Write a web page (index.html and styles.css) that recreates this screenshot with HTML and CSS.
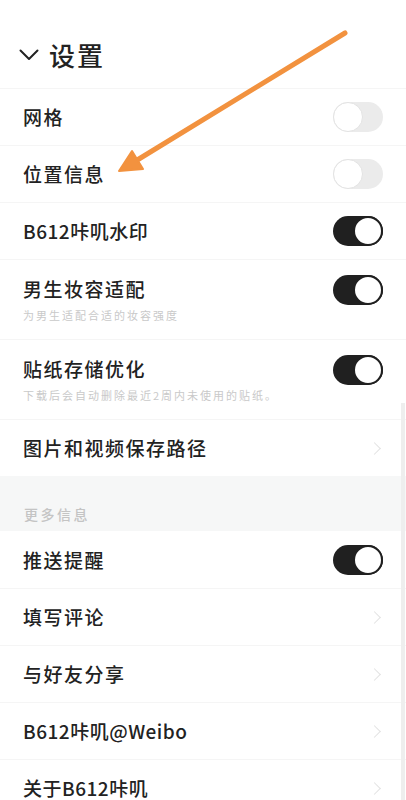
FILE: index.html
```html
<!DOCTYPE html>
<html lang="zh-CN">
<head>
<meta charset="utf-8">
<link rel="stylesheet" href="styles.css">
</head>
<body>
<div class="page">
  <header class="head">
    <svg class="head-chev" width="20" height="12" viewBox="0 0 20 12"><path d="M1.5 1.5 L10 10 L18.5 1.5" fill="none" stroke="#222" stroke-width="2" stroke-linecap="round" stroke-linejoin="round"/></svg>
    <span class="head-title">设置</span>
  </header>

  <div class="row"><span class="label">网格</span><span class="switch off"></span></div>
  <div class="row"><span class="label">位置信息</span><span class="switch off"></span></div>
  <div class="row"><span class="label latin">B612咔叽水印</span><span class="switch on"></span></div>
  <div class="row tall">
    <div class="stack"><span class="label">男生妆容适配</span><span class="sub">为男生适配合适的妆容强度</span></div>
    <span class="switch on"></span>
  </div>
  <div class="row tall">
    <div class="stack"><span class="label">贴纸存储优化</span><span class="sub">下载后会自动删除最近2周内未使用的贴纸。</span></div>
    <span class="switch on"></span>
  </div>
  <div class="row"><span class="label">图片和视频保存路径</span><span class="chev"></span></div>

  <div class="section"><span class="section-label">更多信息</span></div>

  <div class="row first"><span class="label">推送提醒</span><span class="switch on"></span></div>
  <div class="row"><span class="label">填写评论</span><span class="chev"></span></div>
  <div class="row"><span class="label">与好友分享</span><span class="chev"></span></div>
  <div class="row"><span class="label latin">B612咔叽@Weibo</span><span class="chev"></span></div>
  <div class="row"><span class="label latin">关于B612咔叽</span><span class="chev"></span></div>
</div>

<div class="scrollbar"></div>

<svg class="arrow" width="406" height="200" viewBox="0 0 406 200">
  <line x1="345" y1="33" x2="134" y2="162" stroke="#f2923f" stroke-width="5" stroke-linecap="round"/>
  <polygon points="119,171 143,169 132,151" fill="#f2923f" stroke="#f2923f" stroke-width="2" stroke-linejoin="round"/>
</svg>
</body>
</html>
```

FILE: styles.css
```css
* { box-sizing: border-box; }
html, body { margin: 0; padding: 0; background: #ffffff; }
body {
  width: 406px;
  height: 800px;
  overflow: hidden;
  position: relative;
  font-family: "Noto Sans CJK SC", "Noto Sans", sans-serif;
  color: #222222;
}
.page { display: flex; flex-direction: column; }

.head {
  display: flex;
  align-items: center;
  gap: 10px;
  height: 88px;
  padding: 21px 0 0 19px;
}
.head-title {
  font-size: 26px;
  line-height: 32px;
  letter-spacing: 2px;
  font-weight: 500;
}

.row {
  display: flex;
  align-items: center;
  justify-content: space-between;
  height: 57px;
  padding: 0 23px 0 23px;
  border-top: 1px solid #f5f5f5;
}
.row.first { border-top: none; }
.label {
  font-size: 19px;
  line-height: 24px;
  letter-spacing: 1.5px;
  font-weight: 500;
}
.label.latin { letter-spacing: 0.5px; }

.row.tall {
  height: 80px;
  align-items: flex-start;
}
.stack {
  display: flex;
  flex-direction: column;
  gap: 6px;
  padding-top: 17px;
}
.sub {
  font-size: 11px;
  line-height: 16px;
  letter-spacing: 2px;
  color: #c9c9c9;
}
.row.tall .switch { margin-top: 15px; }

.switch {
  position: relative;
  width: 50px;
  height: 30px;
  border-radius: 15px;
  flex: none;
}
.switch::after {
  content: "";
  position: absolute;
  top: 0;
  width: 30px;
  height: 30px;
  border-radius: 50%;
  background: #ffffff;
  box-sizing: border-box;
}
.switch.off { background: #ebebeb; }
.switch.off::after { left: 0; border: 1px solid #e3e3e3; }
.switch.on { background: #202020; }
.switch.on::after { right: 0; border: 2.5px solid #202020; }

.chev {
  width: 9px;
  height: 9px;
  margin-right: 4px;
  border-top: 1.5px solid #e2e2e2;
  border-right: 1.5px solid #e2e2e2;
  transform: rotate(45deg);
  flex: none;
}

.section {
  height: 55px;
  background: #f6f7f7;
  padding: 25px 0 0 24px;
}
.section-label {
  font-size: 14px;
  line-height: 20px;
  letter-spacing: 2.5px;
  color: #c4c4c4;
  font-weight: 500;
}

.scrollbar {
  position: absolute;
  left: 401px;
  top: 403px;
  width: 4px;
  height: 397px;
  background: #eeeeee;
}
.arrow {
  position: absolute;
  left: 0;
  top: 0;
}
```
